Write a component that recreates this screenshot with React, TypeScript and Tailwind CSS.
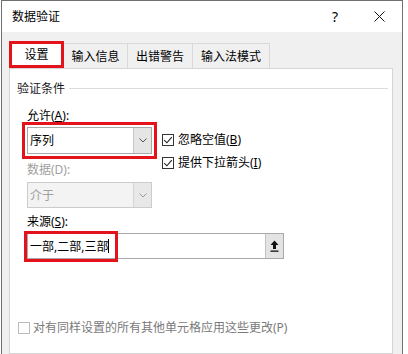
const RED = 'border-[#e3121b]';

function CheckBox({ checked, disabled }: { checked?: boolean; disabled?: boolean }) {
  return (
    <span
      className={`w-[12px] h-[12px] shrink-0 border bg-white flex items-center justify-center ${
        disabled ? 'border-[#bcbcbc]' : 'border-[#333333]'
      }`}
    >
      {checked && (
        <svg width="10" height="10" viewBox="0 0 10 10">
          <path d="M1.2 5.2 L3.9 7.8 L8.8 2.2" stroke="#222" strokeWidth="1.1" fill="none" />
        </svg>
      )}
    </span>
  );
}

function Chevron({ color }: { color: string }) {
  return (
    <svg width="8" height="5" viewBox="0 0 8 5">
      <path d="M0.5 0.5 L4 4 L7.5 0.5" stroke={color} strokeWidth="1" fill="none" />
    </svg>
  );
}

export default function App() {
  return (
    <div className="w-[408px] h-[354px] bg-white overflow-hidden font-[family-name:'Noto_Sans','Noto_Sans_CJK_SC',sans-serif] text-[12px] leading-[17px] text-black">
      {/* Window */}
      <div className="ml-[1px] w-[402px] h-[380px] border border-[#707070] bg-[#f0f0f0] flex flex-col">
        {/* Title bar */}
        <div className="h-[31px] bg-white flex items-center pl-[10px]">
          <span className="flex-1">数据验证</span>
          <span className="text-[14px] w-[12px] text-center mr-[33px]">?</span>
          <svg width="11" height="11" viewBox="0 0 11 11" className="mr-[17px]">
            <path d="M0.5 0.5 L10.5 10.5 M10.5 0.5 L0.5 10.5" stroke="#111" strokeWidth="1" />
          </svg>
        </div>

        {/* Body */}
        <div className="pt-[9px] pl-[7px]">
          {/* Tabs */}
          <div className="flex items-end h-[27px]">
            <div className={`w-[55px] h-[27px] bg-white border-[3px] ${RED} flex items-center justify-center`}>
              设置
            </div>
            <div className="w-[64px] h-[25px] border-t border-r border-[#d9d9d9] flex items-center justify-center">
              输入信息
            </div>
            <div className="w-[65px] h-[25px] border-t border-r border-[#d9d9d9] flex items-center justify-center">
              出错警告
            </div>
            <div className="w-[77px] h-[25px] border-t border-r border-[#d9d9d9] flex items-center justify-center">
              输入法模式
            </div>
          </div>

          {/* Panel */}
          <div className="w-[384px] h-[286px] bg-white border border-[#d5d5d5]">
            {/* Group header */}
            <div className="mt-[11px] h-[17px] flex items-center pl-[7px] pr-[4px]">
              <span className="text-[#1a1a1a]">验证条件</span>
              <div className="flex-1 h-px bg-[#dcdcdc] ml-[4px]" />
            </div>

            <div className="pl-[17px]">
              <div className="flex">
                {/* Left column */}
                <div className="w-[125px] flex flex-col">
                  <div className="mt-[10px] h-[17px]">
                    允许(<span className="underline">A</span>):
                  </div>
                  <div className="mt-[3px] h-[27px] flex border border-[#a9a9a9] bg-white outline-[3px] outline-solid outline-[#e3121b] outline-offset-[2px]">
                    <span className="flex-1 pl-[2px] flex items-center">序列</span>
                    <span className="w-[18px] bg-[#e5e5e5] border-l border-[#c6c6c6] flex items-center justify-center">
                      <Chevron color="#555" />
                    </span>
                  </div>
                  <div className="mt-[7px] h-[17px] text-[#a0a0a0]">数据(D):</div>
                  <div className="mt-[4px] h-[26px] flex border border-[#cccccc] bg-[#f3f3f3]">
                    <span className="flex-1 pl-[2px] flex items-center text-[#a0a0a0]">介于</span>
                    <span className="w-[18px] bg-[#e8e8e8] border-l border-[#d4d4d4] flex items-center justify-center">
                      <Chevron color="#9a9a9a" />
                    </span>
                  </div>
                </div>

                {/* Right column */}
                <div className="ml-[10px] pt-[34px] flex flex-col gap-[6px]">
                  <label className="h-[17px] flex items-center gap-[4px]">
                    <CheckBox checked />
                    <span>
                      忽略空值(<span className="underline">B</span>)
                    </span>
                  </label>
                  <label className="h-[17px] flex items-center gap-[4px]">
                    <CheckBox checked />
                    <span>
                      提供下拉箭头(<span className="underline">I</span>)
                    </span>
                  </label>
                </div>
              </div>

              <div className="mt-[5px] h-[17px]">
                来源(<span className="underline">S</span>):
              </div>
              <div className="relative mt-[3px] w-[257px] h-[26px] flex border border-[#a9a9a9] bg-white">
                <span className="flex-1 pl-[2px] flex items-center">
                  一部,二部,三部<span className="w-px h-[14px] bg-black" />
                </span>
                <span className="w-[18px] bg-[#e3e3e3] border-l border-[#c4c4c4] flex items-center justify-center">
                  <svg width="9" height="12" viewBox="0 0 9 12">
                    <path d="M4.5 0.5 L8.5 5 H6 V9 H3 V5 H0.5 Z" fill="#111" />
                    <rect x="0.5" y="10.5" width="8" height="1.3" fill="#111" />
                  </svg>
                </span>
                {/* annotation box */}
                <div className={`absolute left-[-4px] top-[-3px] w-[94px] h-[31px] border-[3px] ${RED}`} />
              </div>
            </div>

            {/* Bottom option */}
            <div className="mt-[60px] pl-[8px] h-[17px] flex items-center gap-[3px] text-[#7a7a7a]">
              <CheckBox disabled />
              <span>对有同样设置的所有其他单元格应用这些更改(P)</span>
            </div>
          </div>
        </div>
      </div>
    </div>
  );
}
